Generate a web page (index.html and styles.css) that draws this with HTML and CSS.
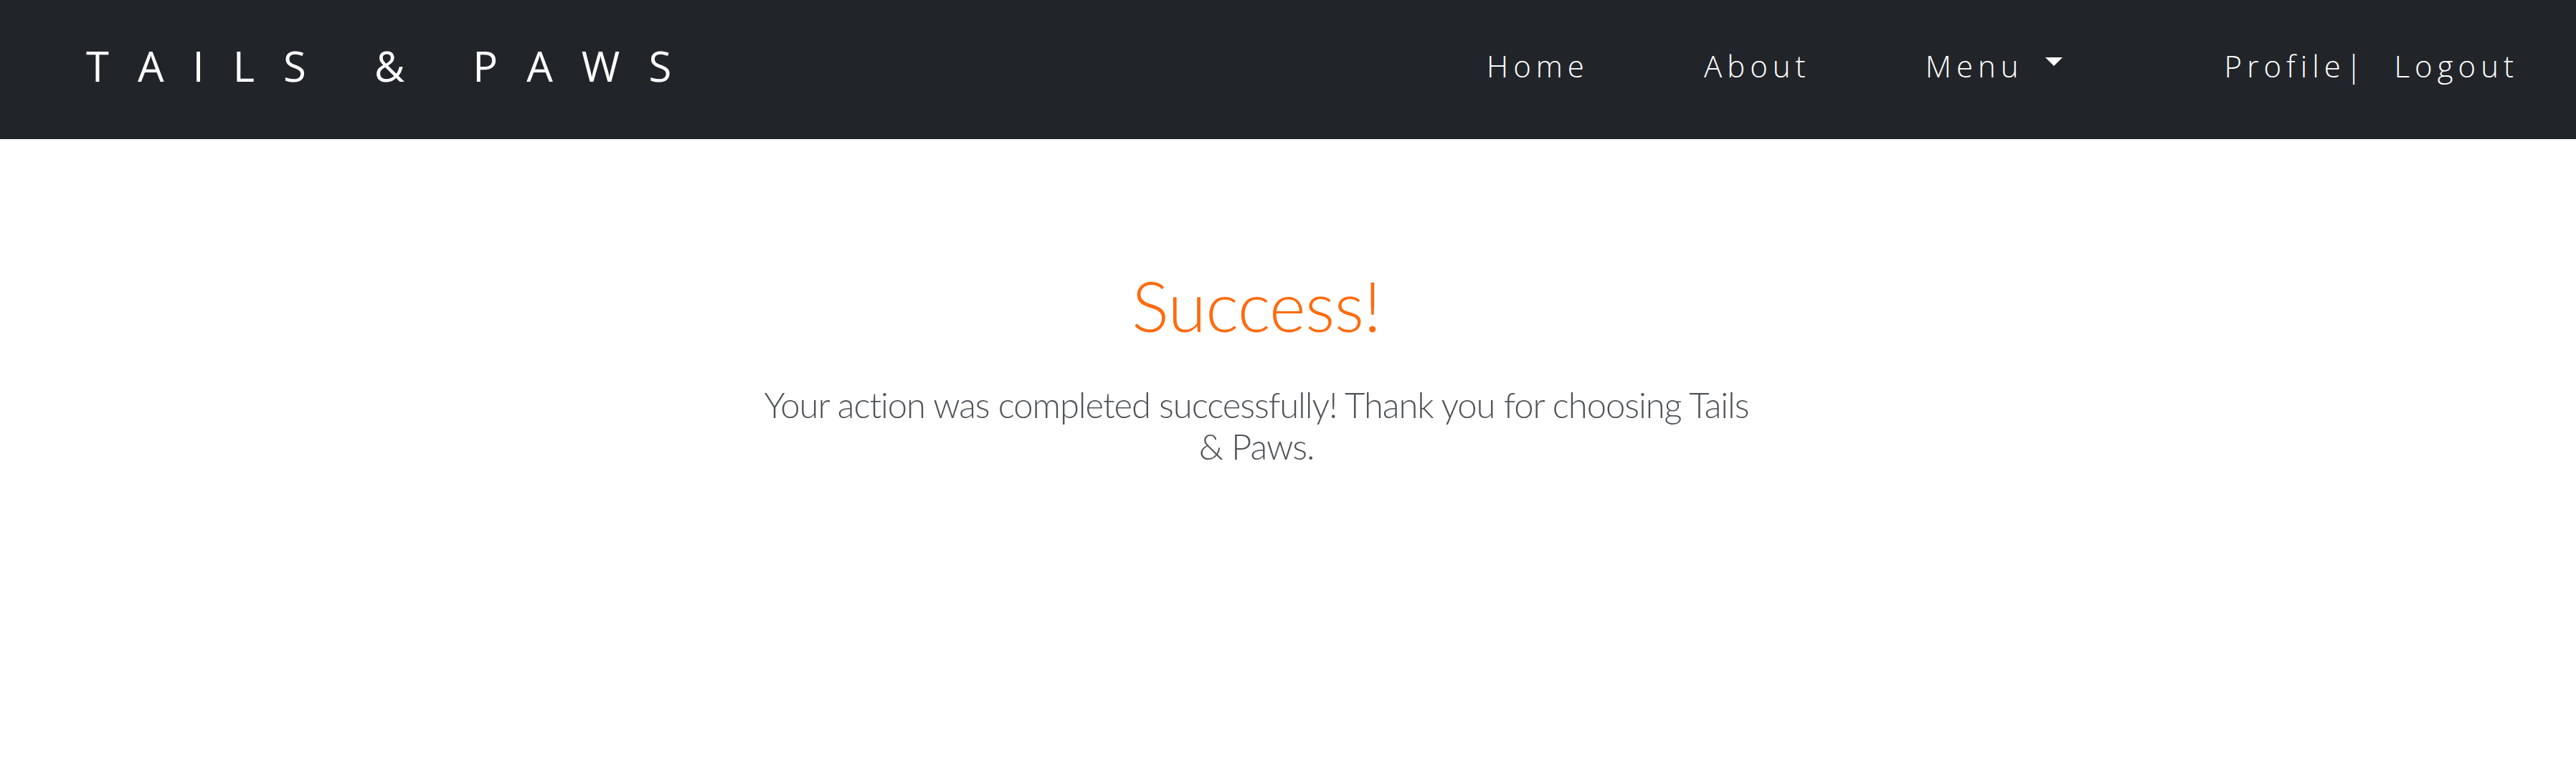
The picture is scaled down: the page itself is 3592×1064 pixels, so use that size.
FILE: index.html
```html
<!DOCTYPE html>
<html lang="en">
<head>
<meta charset="utf-8">
<title>Tails &amp; Paws</title>
<link rel="stylesheet" href="styles.css">
</head>
<body>
<header class="navbar">
  <a class="brand" href="#">TAILS &amp; PAWS</a>
  <nav class="nav-main">
    <a class="nav-link" href="#">Home</a>
    <a class="nav-link" href="#">About</a>
    <a class="nav-link dropdown-toggle" href="#">Menu</a>
  </nav>
  <div class="nav-auth">
    <a class="nav-link" href="#">Profile|</a>
    <a class="nav-link" href="#">Logout</a>
  </div>
</header>
<main class="content">
  <h1 class="title">Success!</h1>
  <p class="message">Your action was completed successfully! Thank you for choosing Tails &amp; Paws.</p>
</main>
</body>
</html>
```

FILE: styles.css
```css
html, body {
  margin: 0;
  padding: 0;
  background: #ffffff;
  font-family: "Open Sans", "Noto Sans", sans-serif;
}

.navbar {
  display: flex;
  align-items: center;
  height: 194px;
  box-sizing: border-box;
  padding: 0 80px 12px 120px;
  background: #212529;
}

.brand {
  color: #ffffff;
  text-decoration: none;
  font-size: 58px;
  font-weight: 400;
  letter-spacing: 40px;
  white-space: nowrap;
}

.nav-main {
  display: flex;
  align-items: center;
  gap: 160px;
  margin-left: auto;
}

.nav-auth {
  display: flex;
  align-items: center;
  gap: 38px;
  margin-left: 226px;
}

.nav-link {
  color: #ffffff;
  text-decoration: none;
  font-size: 42px;
  font-weight: 300;
  letter-spacing: 7px;
  white-space: nowrap;
}

.dropdown-toggle {
  display: flex;
  align-items: center;
}

.dropdown-toggle::after {
  content: "";
  display: block;
  margin-left: 30px;
  margin-top: -10px;
  border-top: 12px solid #ffffff;
  border-left: 12px solid transparent;
  border-right: 12px solid transparent;
}

.content {
  padding: 174px 88px 0 0;
  text-align: center;
  font-family: Lato, "Open Sans", sans-serif;
}

.title {
  margin: 0 0 51px;
  font-size: 97px;
  line-height: 116px;
  font-weight: 300;
  letter-spacing: -0.5px;
  color: #ff6a0d;
}

.message {
  margin: 0 auto;
  max-width: 1400px;
  font-size: 49px;
  line-height: 58px;
  font-weight: 300;
  letter-spacing: -1.1px;
  color: #4f5459;
}
```
